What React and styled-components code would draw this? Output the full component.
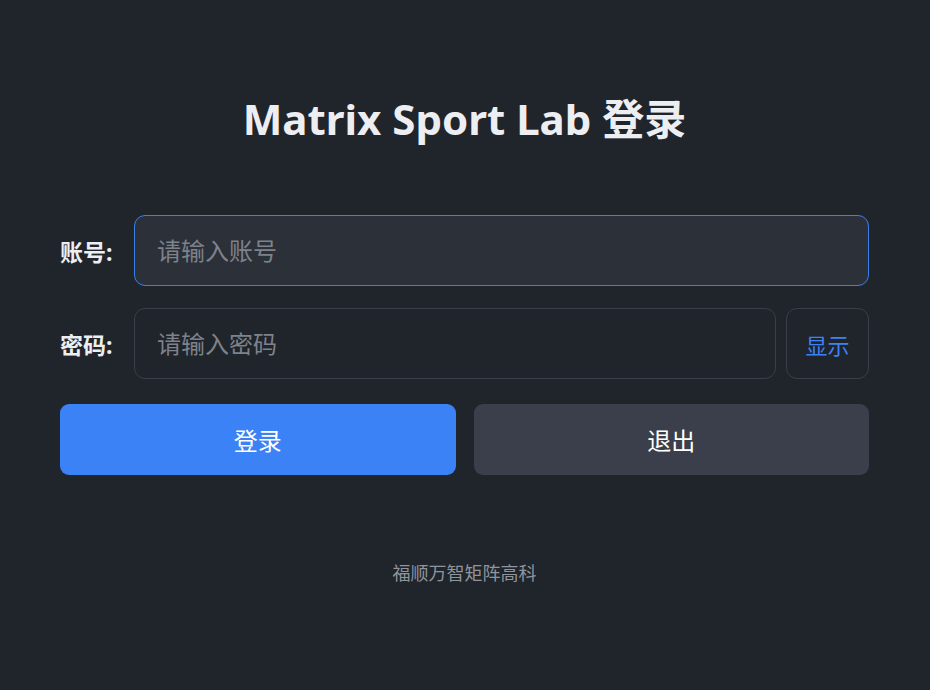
import React from "react";
import styled, { createGlobalStyle } from "styled-components";

const GlobalStyle = createGlobalStyle`
  html, body {
    margin: 0;
    padding: 0;
    background: #20242b;
  }
  * {
    box-sizing: border-box;
  }
`;

const Page = styled.div`
  width: 930px;
  height: 690px;
  background: #20242b;
  padding: 93px 61px 0 60px;
  display: flex;
  flex-direction: column;
  font-family: "Noto Sans", "Noto Sans CJK SC", sans-serif;
  color: #e8eaee;
`;

const Title = styled.h1`
  margin: 0 0 70px;
  text-align: center;
  font-size: 42px;
  line-height: 52px;
  font-weight: 700;
  color: #eceef2;
`;

const Row = styled.div`
  display: flex;
  align-items: center;
  gap: 10px;
  margin-bottom: ${(p) => p.$gap || 22}px;
`;

const Label = styled.label`
  width: 64px;
  flex-shrink: 0;
  font-size: 23px;
  font-weight: 700;
  color: #eceef2;
`;

const Input = styled.input`
  flex: 1;
  min-width: 0;
  height: 71px;
  padding: 0 22px;
  border-radius: 11px;
  border: 1px solid ${(p) => (p.$focused ? "#3b7fe8" : "#3a3e47")};
  background: ${(p) => (p.$focused ? "#2c3039" : "#20242b")};
  color: #e8eaee;
  font-family: "Noto Sans", "Noto Sans CJK SC", sans-serif;
  font-size: 24px;
  outline: none;
  caret-color: #e8eaee;
  &::placeholder {
    color: #7e828a;
  }
`;

const ShowButton = styled.button`
  width: 83px;
  height: 71px;
  flex-shrink: 0;
  border-radius: 11px;
  border: 1px solid #3a3e47;
  background: transparent;
  color: #3b82f6;
  font-family: "Noto Sans", "Noto Sans CJK SC", sans-serif;
  font-size: 22px;
  cursor: pointer;
`;

const Actions = styled.div`
  display: grid;
  grid-template-columns: 1fr 1fr;
  gap: 18px;
`;

const ActionButton = styled.button`
  height: 71px;
  border: none;
  border-radius: 9px;
  background: ${(p) => (p.$primary ? "#3b82f6" : "#3b3f4b")};
  color: #ffffff;
  font-family: "Noto Sans", "Noto Sans CJK SC", sans-serif;
  font-size: 24px;
  cursor: pointer;
`;

const Footer = styled.div`
  margin-top: 84px;
  text-align: center;
  font-size: 18px;
  color: #8f949d;
`;

export default function App() {
  return (
    <>
      <GlobalStyle />
      <Page>
        <Title>Matrix Sport Lab 登录</Title>
        <Row>
          <Label>账号:</Label>
          <Input $focused autoFocus placeholder="请输入账号" />
        </Row>
        <Row $gap={25}>
          <Label>密码:</Label>
          <Input type="password" placeholder="请输入密码" />
          <ShowButton>显示</ShowButton>
        </Row>
        <Actions>
          <ActionButton $primary>登录</ActionButton>
          <ActionButton>退出</ActionButton>
        </Actions>
        <Footer>福顺万智矩阵高科</Footer>
      </Page>
    </>
  );
}
